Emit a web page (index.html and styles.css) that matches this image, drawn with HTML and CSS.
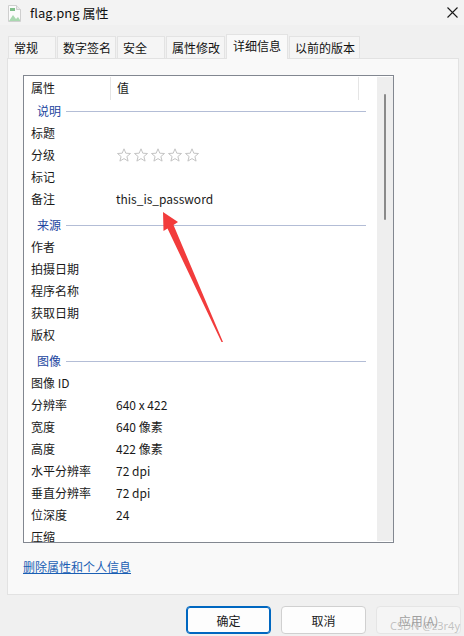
FILE: index.html
```html
<!doctype html>
<html>
  <head>
    <meta charset="utf-8" />
    <title>flag.png 属性</title>
    <link rel="stylesheet" href="styles.css">
  </head>
  <body>
    <div class="titlebar">
      <svg class="file-icon" width="14" height="17" viewBox="0 0 14 17">
        <path d="M1.5 0.5h8l4 4v12h-12z" fill="#fbfbfb" stroke="#cfcfcf"/>
        <path d="M9.5 0.5v4h4" fill="#e8e8e8" stroke="#cfcfcf"/>
        <rect x="3" y="3" width="5" height="3" fill="#7fbf8a"/>
        <path d="M2 16l4-6 3 4 2-2 2 3v1z" fill="#a9d8b0"/>
      </svg>
      <span class="title">flag.png 属性</span>
      <svg class="close" width="11" height="11" viewBox="0 0 11 11">
        <path d="M0.5 0.5l10 10M10.5 0.5l-10 10" stroke="#1a1a1a" stroke-width="1.1"/>
      </svg>
    </div>

    <div class="tabs">
      <span class="tab">常规</span>
      <span class="tab">数字签名</span>
      <span class="tab">安全</span>
      <span class="tab">属性修改</span>
      <span class="tab active">详细信息</span>
      <span class="tab">以前的版本</span>
    </div>

    <div class="panel">
      <div class="list">
        <div class="list-body">
          <div class="head">
            <span class="name">属性</span>
            <span class="sep"></span>
            <span class="value">值</span>
            <span class="sep right"></span>
          </div>

          <div class="group first"><span>说明</span><i></i></div>
          <div class="row"><span class="name">标题</span></div>
          <div class="row">
            <span class="name">分级</span>
            <span class="value stars">
              <svg width="84" height="14" viewBox="0 0 84 14">
                <defs>
                  <path id="star" d="M7 0.8l1.8 4.4 4.7 0.3-3.6 3 1.2 4.6-4.1-2.5-4.1 2.5 1.2-4.6-3.6-3 4.7-0.3z" fill="none" stroke="#c4c4c4" stroke-width="1"/>
                </defs>
                <use href="#star" x="0"/>
                <use href="#star" x="17"/>
                <use href="#star" x="34"/>
                <use href="#star" x="51"/>
                <use href="#star" x="68"/>
              </svg>
            </span>
          </div>
          <div class="row"><span class="name">标记</span></div>
          <div class="row"><span class="name">备注</span><span class="value">this_is_password</span></div>

          <div class="group"><span>来源</span><i></i></div>
          <div class="row"><span class="name">作者</span></div>
          <div class="row"><span class="name">拍摄日期</span></div>
          <div class="row"><span class="name">程序名称</span></div>
          <div class="row"><span class="name">获取日期</span></div>
          <div class="row"><span class="name">版权</span></div>

          <div class="group"><span>图像</span><i></i></div>
          <div class="row"><span class="name">图像 ID</span></div>
          <div class="row"><span class="name">分辨率</span><span class="value">640 x 422</span></div>
          <div class="row"><span class="name">宽度</span><span class="value">640 像素</span></div>
          <div class="row"><span class="name">高度</span><span class="value">422 像素</span></div>
          <div class="row"><span class="name">水平分辨率</span><span class="value">72 dpi</span></div>
          <div class="row"><span class="name">垂直分辨率</span><span class="value">72 dpi</span></div>
          <div class="row"><span class="name">位深度</span><span class="value">24</span></div>
          <div class="row"><span class="name">压缩</span></div>
        </div>
        <div class="scrollbar"><span class="thumb"></span></div>
      </div>

      <a class="remove-link" href="#">删除属性和个人信息</a>
    </div>

    <div class="buttons">
      <button class="btn primary">确定</button>
      <button class="btn">取消</button>
      <button class="btn disabled">应用(A)</button>
    </div>

    <svg class="arrow" width="464" height="636" viewBox="0 0 464 636">
      <path d="M163 212L178 222L173.5 225L223 342L221.5 342L167.5 228.5L163.5 231Z" fill="#f23c3c"/>
    </svg>
    <span class="watermark">CSDN @z3r4y</span>
  </body>
</html>
```

FILE: styles.css
```css
* { margin: 0; padding: 0; box-sizing: border-box; }
body {
  background: #f0f0f0;
  color: #1a1a1a;
  font-family: "Noto Sans CJK SC", "Noto Sans", sans-serif;
  font-size: 12px;
  width: 464px;
  height: 636px;
  overflow: hidden;
  position: relative;
}

.titlebar {
  height: 25px;
  background: #f3f3f3;
  display: flex;
  align-items: center;
  padding-left: 7px;
}
.file-icon { margin-top: 2px; }
.title { margin-left: 9px; font-size: 13px; color: #111; }
.close { margin-left: auto; margin-right: 6px; }

.tabs {
  display: flex;
  align-items: flex-end;
  height: 24px;
  margin-top: 9px;
  padding-left: 8px;
  position: relative;
  z-index: 1;
}
.tab {
  min-width: 48px;
  height: 22px;
  line-height: 21px;
  padding: 0 4px 0 5px;
  background: #f5f5f5;
  border: 1px solid #e3e3e3;
  border-bottom: none;
  margin-right: 1px;
  color: #111;
}
.tab.active {
  height: 25px;
  line-height: 22px;
  padding: 0 6px 0 6px;
  background: #f9f9f9;
  margin-bottom: -1px;
}

.panel {
  margin: 0 5px 0 7px;
  height: 537px;
  background: #f9f9f9;
  border: 1px solid #e2e2e2;
  padding: 16px 0 0 15px;
}

.list {
  width: 371px;
  height: 468px;
  background: #fff;
  border: 1px solid #828790;
  display: flex;
  overflow: hidden;
}
.list-body { flex: 1; overflow: hidden; }

.head { display: flex; height: 24px; align-items: flex-start; }
.head .name, .head .value { line-height: 24px; }
.sep { width: 1px; height: 23px; margin-top: 1px; background: #e5e5e5; }
.head .value { width: 247px; }

.name { width: 86px; padding-left: 7px; flex: none; white-space: nowrap; }
.value { padding-left: 6px; white-space: nowrap; }

.row { display: flex; height: 22px; line-height: 22px; }
.stars { display: flex; align-items: center; padding-left: 7px; }

.group {
  display: flex;
  align-items: center;
  height: 26px;
  padding: 4px 11px 0 13px;
  color: #2346a0;
}
.group.first { height: 22px; padding-top: 0; }
.group span { line-height: 22px; }
.group i { flex: 1; height: 1px; background: #b3bdd6; margin-left: 5px; }

.scrollbar {
  width: 16px;
  margin: 1px 0;
  background: #eeeeee;
  display: flex;
  justify-content: center;
}
.thumb {
  width: 2px;
  height: 126px;
  margin-top: 17px;
  background: #8a8a8a;
  border-radius: 1px;
}

.remove-link {
  display: inline-block;
  margin-top: 15px;
  color: #1a5fb4;
  text-decoration: underline;
}

.buttons {
  display: flex;
  justify-content: flex-end;
  gap: 10px;
  padding-right: 3px;
  margin-top: 11px;
}
.btn {
  width: 85px;
  height: 28px;
  font: inherit;
  font-size: 12px;
  color: #1a1a1a;
  background: #fdfdfd;
  border: 1px solid #d0d0d0;
  border-radius: 4px;
}
.btn.primary { border: 1px solid #0067c0; box-shadow: inset 0 0 0 1px #0067c0; }
.btn.disabled { background: #f5f5f5; border-color: #e5e5e5; color: #a0a0a0; }

.arrow { position: absolute; left: 0; top: 0; pointer-events: none; }
.watermark {
  position: absolute;
  right: 4px;
  bottom: 3px;
  font-size: 11px;
  color: rgba(150, 150, 150, 0.55);
  font-family: "Noto Sans", sans-serif;
}
```
